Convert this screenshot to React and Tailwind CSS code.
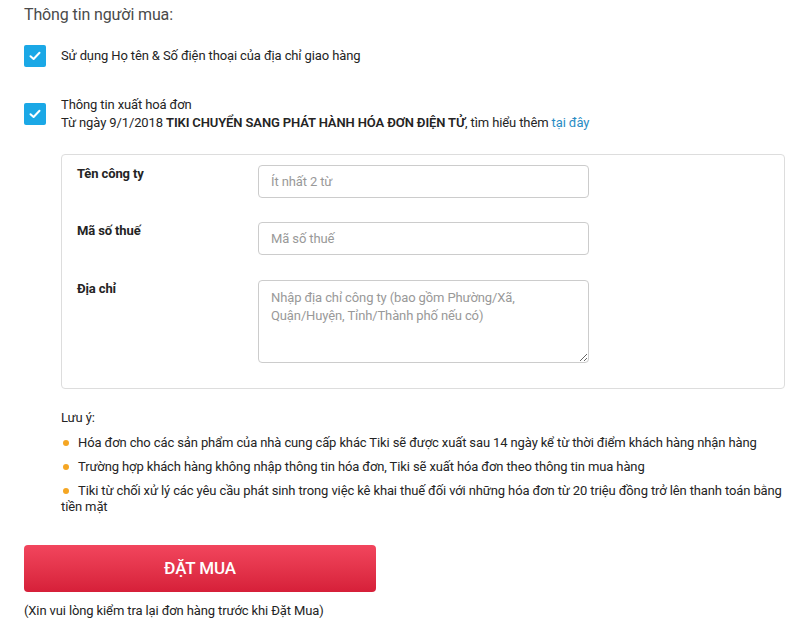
import { useState } from 'react';

const NOTES = [
  'Hóa đơn cho các sản phẩm của nhà cung cấp khác Tiki sẽ được xuất sau 14 ngày kể từ thời điểm khách hàng nhận hàng',
  'Trường hợp khách hàng không nhập thông tin hóa đơn, Tiki sẽ xuất hóa đơn theo thông tin mua hàng',
  'Tiki từ chối xử lý các yêu cầu phát sinh trong việc kê khai thuế đối với những hóa đơn từ 20 triệu đồng trở lên thanh toán bằng tiền mặt',
];

function CheckBox({ checked, onChange }) {
  return (
    <button
      type="button"
      onClick={onChange}
      className={[
        'flex h-[22px] w-[22px] shrink-0 items-center justify-center rounded-[2px]',
        checked ? 'bg-[#1ba8e6]' : 'bg-white ring-1 ring-[#ccc]',
      ].join(' ')}
    >
      {checked && (
        <svg width="12" height="10" viewBox="0 0 12 10" fill="none">
          <path d="M1.5 5.2 L4.6 8 L10.5 1.8" stroke="white" strokeWidth="2" strokeLinecap="round" strokeLinejoin="round" />
        </svg>
      )}
    </button>
  );
}

export default function App() {
  const [useShipping, setUseShipping] = useState(true);
  const [invoice, setInvoice] = useState(true);

  return (
    <div className="min-h-[627px] w-[800px] bg-white font-['Roboto','Liberation_Sans',sans-serif] text-[13px] tracking-[-0.12px] text-[#242424]">
      <div className="px-[24px] pt-[4px]">
        <h3 className="text-[16px] leading-[22px] text-[#4a4a4a]">Thông tin người mua:</h3>

        <div className="mt-[19px] flex items-center gap-[15px]">
          <CheckBox checked={useShipping} onChange={() => setUseShipping(!useShipping)} />
          <span className="leading-[18px]">Sử dụng Họ tên &amp; Số điện thoại của địa chỉ giao hàng</span>
        </div>

        <div className="mt-[29px] flex items-center gap-[15px]">
          <CheckBox checked={invoice} onChange={() => setInvoice(!invoice)} />
          <div className="leading-[18px]">
            <div>Thông tin xuất hoá đơn</div>
            <div>
              Từ ngày 9/1/2018 <b className="font-semibold">TIKI CHUYỂN SANG PHÁT HÀNH HÓA ĐƠN ĐIỆN TỬ</b>, tìm hiểu thêm{' '}
              <a href="#" className="text-[#2a8cc4]">tại đây</a>
            </div>
          </div>
        </div>
      </div>

      {invoice && (
        <div className="ml-[61px] mr-[15px] mt-[22px] rounded-[4px] border border-[#ddd] pb-[25px] pl-[15px] pr-[15px] pt-[10px]">
          <div className="grid grid-cols-[181px_331px] gap-y-[24px]">
            <label className="font-bold leading-[18px]">Tên công ty</label>
            <input
              placeholder="Ít nhất 2 từ"
              className="h-[33px] rounded-[4px] border border-[#ccc] px-[12px] text-[13px] placeholder:text-[#999] focus:outline-none"
            />
            <label className="font-bold leading-[18px]">Mã số thuế</label>
            <input
              placeholder="Mã số thuế"
              className="h-[33px] rounded-[4px] border border-[#ccc] px-[12px] text-[13px] placeholder:text-[#999] focus:outline-none"
            />
            <label className="mt-[1px] font-bold leading-[18px]">Địa chỉ</label>
            <textarea
              placeholder="Nhập địa chỉ công ty (bao gồm Phường/Xã, Quận/Huyện, Tỉnh/Thành phố nếu có)"
              className="mt-[1px] h-[83px] rounded-[4px] border border-[#ccc] px-[12px] py-[8px] text-[13px] leading-[18px] placeholder:text-[#999] focus:outline-none"
            />
          </div>
        </div>
      )}

      <div className="ml-[61px] mr-[15px] mt-[21px] leading-[16px]">
        <div>Lưu ý:</div>
        <ul className="mt-[9px] flex flex-col gap-[8px]">
          {NOTES.map((n) => (
            <li key={n}>
              <span className="ml-[2px] inline-block h-[6px] w-[6px] translate-y-[-1px] rounded-full bg-[#f5a623]" />
              <span className="ml-[9px]">{n}</span>
            </li>
          ))}
        </ul>
      </div>

      <div className="px-[24px] pt-[30px]">
        <button
          type="button"
          className="h-[47px] w-[352px] rounded-[4px] bg-gradient-to-b from-[#f2455d] to-[#d61f39] text-[17px] font-medium text-white"
        >
          ĐẶT MUA
        </button>
        <p className="mt-[11px] leading-[16px] text-[#242424]">(Xin vui lòng kiểm tra lại đơn hàng trước khi Đặt Mua)</p>
      </div>
    </div>
  );
}
